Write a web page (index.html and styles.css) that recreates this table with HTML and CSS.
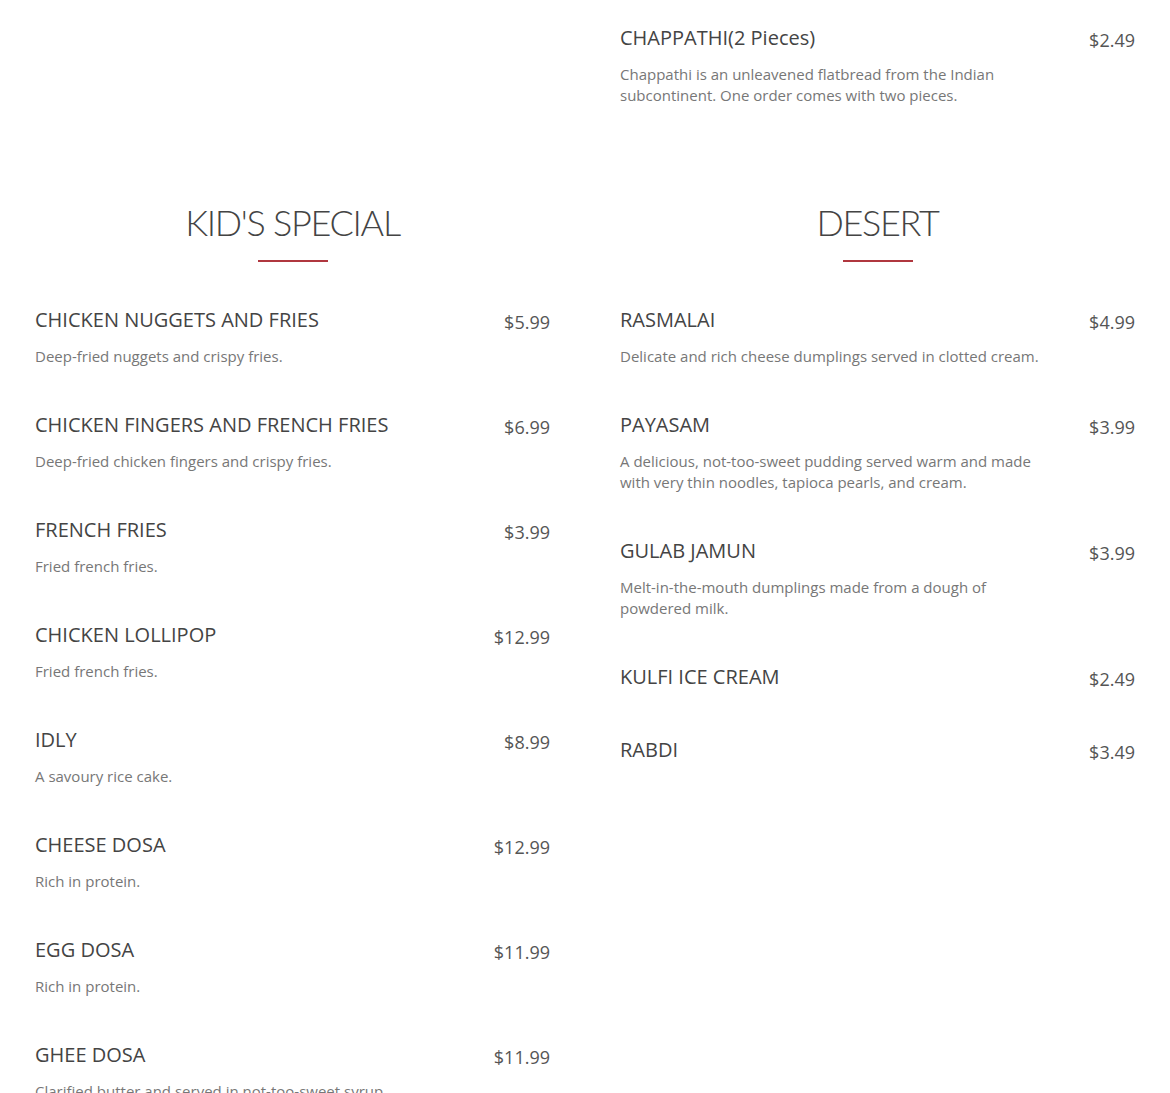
FILE: index.html
```html
<!DOCTYPE html>
<html>
<head>
<meta charset="utf-8">
<link rel="stylesheet" href="styles.css">
</head>
<body>
<div class="menu">
  <div class="row top-row">
    <div class="col"></div>
    <div class="col">
      <div class="item">
        <div class="item-head"><span class="name">CHAPPATHI(2 Pieces)</span><span class="price">$2.49</span></div>
        <p class="desc">Chappathi is an unleavened flatbread from the Indian subcontinent. One order comes with two pieces.</p>
      </div>
    </div>
  </div>
  <div class="row">
    <section class="col">
      <h2 class="title">KID'S SPECIAL</h2>
      <div class="divider"></div>
      <div class="item">
        <div class="item-head"><span class="name">CHICKEN NUGGETS AND FRIES</span><span class="price">$5.99</span></div>
        <p class="desc">Deep-fried nuggets and crispy fries.</p>
      </div>
      <div class="item">
        <div class="item-head"><span class="name">CHICKEN FINGERS AND FRENCH FRIES</span><span class="price">$6.99</span></div>
        <p class="desc">Deep-fried chicken fingers and crispy fries.</p>
      </div>
      <div class="item">
        <div class="item-head"><span class="name">FRENCH FRIES</span><span class="price">$3.99</span></div>
        <p class="desc">Fried french fries.</p>
      </div>
      <div class="item">
        <div class="item-head"><span class="name">CHICKEN LOLLIPOP</span><span class="price">$12.99</span></div>
        <p class="desc">Fried french fries.</p>
      </div>
      <div class="item">
        <div class="item-head"><span class="name">IDLY</span><span class="price">$8.99</span></div>
        <p class="desc">A savoury rice cake.</p>
      </div>
      <div class="item">
        <div class="item-head"><span class="name">CHEESE DOSA</span><span class="price">$12.99</span></div>
        <p class="desc">Rich in protein.</p>
      </div>
      <div class="item">
        <div class="item-head"><span class="name">EGG DOSA</span><span class="price">$11.99</span></div>
        <p class="desc">Rich in protein.</p>
      </div>
      <div class="item">
        <div class="item-head"><span class="name">GHEE DOSA</span><span class="price">$11.99</span></div>
        <p class="desc">Clarified butter and served in not-too-sweet syrup.</p>
      </div>
    </section>
    <section class="col">
      <h2 class="title">DESERT</h2>
      <div class="divider"></div>
      <div class="item">
        <div class="item-head"><span class="name">RASMALAI</span><span class="price">$4.99</span></div>
        <p class="desc">Delicate and rich cheese dumplings served in clotted cream.</p>
      </div>
      <div class="item">
        <div class="item-head"><span class="name">PAYASAM</span><span class="price">$3.99</span></div>
        <p class="desc">A delicious, not-too-sweet pudding served warm and made with very thin noodles, tapioca pearls, and cream.</p>
      </div>
      <div class="item">
        <div class="item-head"><span class="name">GULAB JAMUN</span><span class="price">$3.99</span></div>
        <p class="desc">Melt-in-the-mouth dumplings made from a dough of powdered milk.</p>
      </div>
      <div class="item no-desc">
        <div class="item-head"><span class="name">KULFI ICE CREAM</span><span class="price">$2.49</span></div>
      </div>
      <div class="item no-desc">
        <div class="item-head"><span class="name">RABDI</span><span class="price">$3.49</span></div>
      </div>
    </section>
  </div>
</div>
</body>
</html>
```

FILE: styles.css
```css
html, body {
  margin: 0;
  padding: 0;
  background: #fff;
}
body {
  font-family: "Open Sans", "Liberation Sans", sans-serif;
  color: #444;
  overflow: hidden;
  height: 1093px;
}
.menu {
  padding: 24px 35px 0;
}
.row {
  display: grid;
  grid-template-columns: 515px 515px;
  column-gap: 70px;
}
.top-row {
  margin-bottom: 52px;
}
.title {
  margin: 0;
  font-family: "Lato", "Open Sans", sans-serif;
  font-weight: 300;
  font-size: 36px;
  line-height: 40px;
  letter-spacing: -1.3px;
  text-align: center;
  color: #444;
}
.divider {
  width: 70px;
  height: 2px;
  background: #b0373f;
  margin: 18px auto 44px;
}
.item {
  margin-bottom: 44px;
}
.item.no-desc {
  margin-bottom: 45px;
}
.item-head {
  display: flex;
  justify-content: space-between;
  align-items: flex-start;
  height: 28px;
}
.name {
  font-size: 20px;
  line-height: 28px;
  color: #444;
}
.price {
  font-size: 18px;
  line-height: 28px;
  padding-top: 2px;
  color: #555;
}
.desc {
  margin: 12px 0 0;
  font-size: 15px;
  line-height: 21px;
  color: #777;
  max-width: 420px;
}
```
